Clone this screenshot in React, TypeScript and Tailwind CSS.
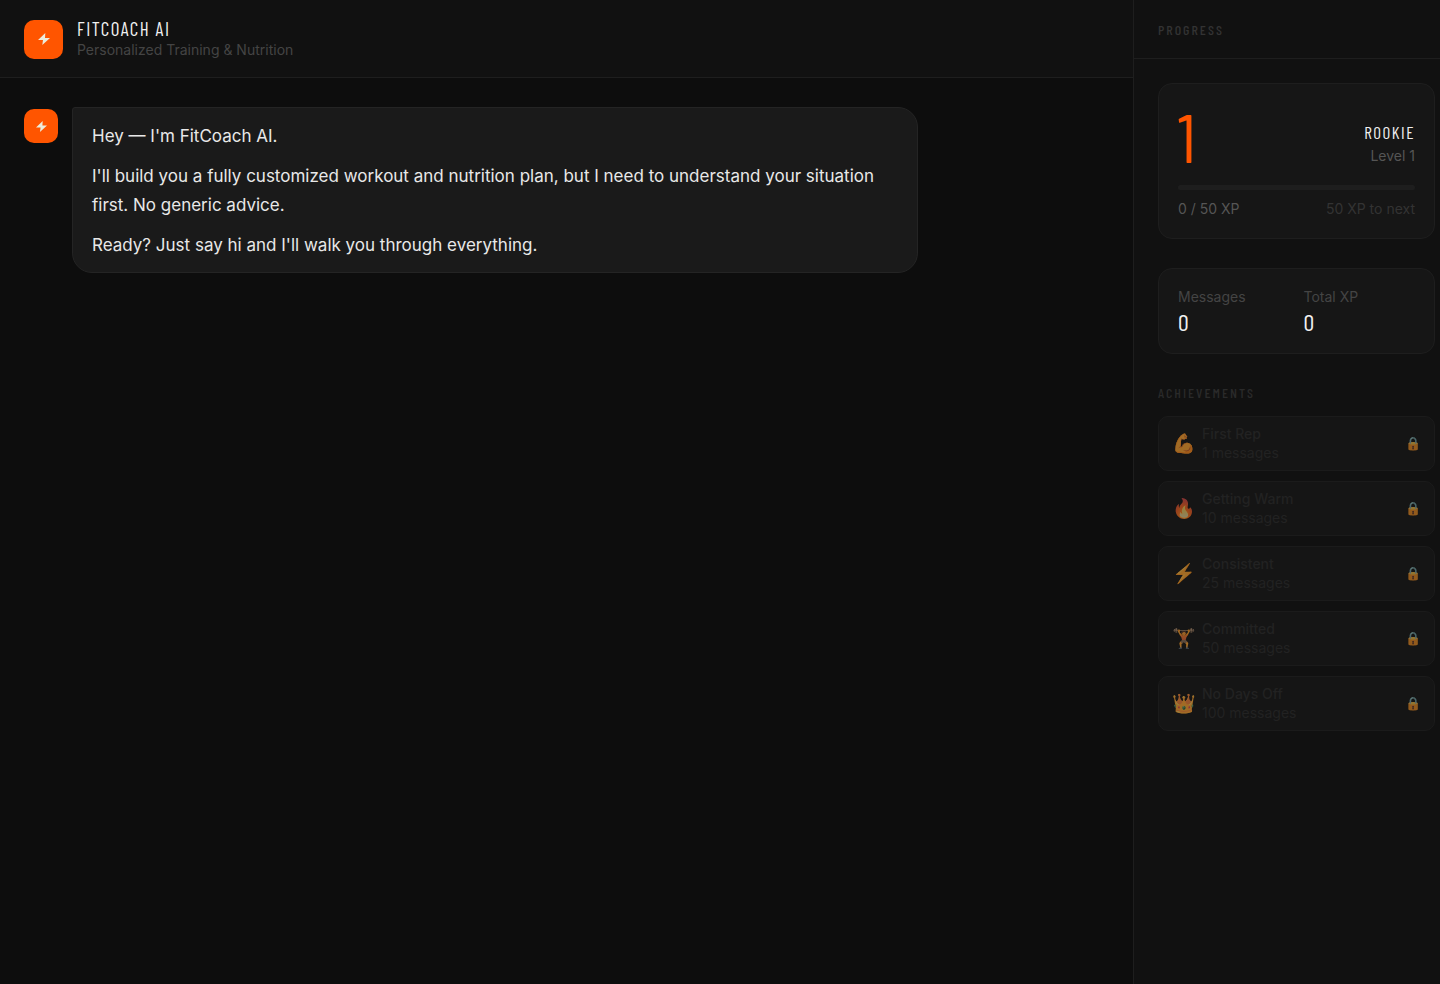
type Achievement = { icon: string; name: string; goal: number };

const achievements: Achievement[] = [
  { icon: "💪", name: "First Rep", goal: 1 },
  { icon: "🔥", name: "Getting Warm", goal: 10 },
  { icon: "⚡", name: "Consistent", goal: 25 },
  { icon: "🏋️", name: "Committed", goal: 50 },
  { icon: "👑", name: "No Days Off", goal: 100 },
];

const narrow = "font-['Barlow_Condensed','Liberation_Sans_Narrow',sans-serif]";

function Bolt({ className }: { className: string }) {
  return (
    <svg viewBox="0 0 12 12" className={className} fill="#ececdc" aria-hidden="true">
      <path d="M7.3 0 0 7.1h5L4.3 12 12 4.9H7z" />
    </svg>
  );
}

function Stat({ label, value }: { label: string; value: number }) {
  return (
    <div>
      <dt className="text-sm leading-[19px] text-[#444444]">{label}</dt>
      <dd className={`${narrow} text-2xl leading-8 text-[#f0f0f0]`}>{value}</dd>
    </div>
  );
}

export default function App() {
  return (
    <div className="flex min-h-screen bg-[#0d0d0d] font-['Inter',sans-serif] text-[#f0f0f0]">
      <main className="min-w-0 flex-1">
        <header className="flex items-center gap-3.5 border-b border-[#1e1e1e] bg-[#111111] px-6 pt-[18px] pb-[17px]">
          <div className="flex size-[39px] items-center justify-center rounded-[10px] bg-[#ff5500]">
            <Bolt className="size-3" />
          </div>
          <div>
            <h1 className={`${narrow} text-[19px] leading-[22px] tracking-[1.5px]`}>FITCOACH AI</h1>
            <p className="text-sm leading-5 text-[#444444]">Personalized Training &amp; Nutrition</p>
          </div>
        </header>
        <section className="flex items-start gap-3.5 px-6 py-[29px]">
          <div className="mt-0.5 flex size-[34px] shrink-0 items-center justify-center rounded-[10px] bg-[#ff5500]">
            <Bolt className="size-[11px]" />
          </div>
          <div className="flex w-[78%] flex-col gap-[11px] rounded-[20px] rounded-tl-[3px] border border-[#242424] bg-[#1a1a1a] px-[19px] pt-3.5 pb-3 text-[17px] leading-[29px] text-[#e8e8e8]">
            <p>Hey — I'm FitCoach AI.</p>
            <p>
              I'll build you a fully customized workout and nutrition plan, but I need to understand your situation
              first. No generic advice.
            </p>
            <p>Ready? Just say hi and I'll walk you through everything.</p>
          </div>
        </section>
      </main>

      <aside className="w-[307px] shrink-0 border-l border-[#1e1e1e] bg-[#111111]">
        <div className="border-b border-[#1e1e1e] px-6 pt-[21px] pb-[19px]">
          <h2 className={`${narrow} text-sm leading-[18px] font-medium tracking-[2px] text-[#333333]`}>PROGRESS</h2>
        </div>
        <div className="pt-6 pr-[5px] pl-6">
          <section className="rounded-[14px] border border-[#1e1e1e] bg-[#161616] px-[19px] pt-5 pb-[17px]">
            <div className="flex items-center justify-between">
              <span className={`${narrow} text-[68px] leading-[64px] text-[#ff5500]`}>1</span>
              <div className="pt-4 text-right">
                <p className={`${narrow} text-[17px] leading-6 tracking-[1.5px]`}>ROOKIE</p>
                <p className="text-sm leading-6 text-[#555555]">Level 1</p>
              </div>
            </div>
            <div className="mt-[17px] h-[5px] rounded-full bg-[#1e1e1e]" />
            <div className="mt-[7px] flex justify-between text-sm leading-6">
              <span className="text-[#555555]">0 / 50 XP</span>
              <span className="text-[#333333]">50 XP to next</span>
            </div>
          </section>

          <dl className="mt-[29px] grid grid-cols-2 gap-3.5 rounded-[14px] border border-[#1e1e1e] bg-[#161616] px-[19px] pt-[18px] pb-[15px]">
            <Stat label="Messages" value={0} />
            <Stat label="Total XP" value={0} />
          </dl>

          <h2 className={`${narrow} mt-[30px] text-sm leading-[18px] font-medium tracking-[2px] text-[#2a2a2a]`}>
            ACHIEVEMENTS
          </h2>
          <ul className="mt-3.5 flex flex-col gap-2.5">
            {achievements.map((a) => (
              <li
                key={a.name}
                className="flex h-[55px] items-center gap-2.5 rounded-[10px] border border-[#1b1b1b] bg-[#151515] px-[13px]"
              >
                <span className="w-5 text-[19px] leading-6 opacity-60 [filter:sepia(0.6)_brightness(0.8)_hue-rotate(-14deg)_saturate(1.9)]">
                  {a.icon}
                </span>
                <div className="flex-1 pb-px text-sm leading-[19px] text-[#222222]">
                  <p className="font-medium">{a.name}</p>
                  <p>{a.goal} messages</p>
                </div>
                <span className="text-[13px] opacity-60 [filter:hue-rotate(-16deg)_brightness(0.9)]">🔒</span>
              </li>
            ))}
          </ul>
        </div>
      </aside>
    </div>
  );
}
